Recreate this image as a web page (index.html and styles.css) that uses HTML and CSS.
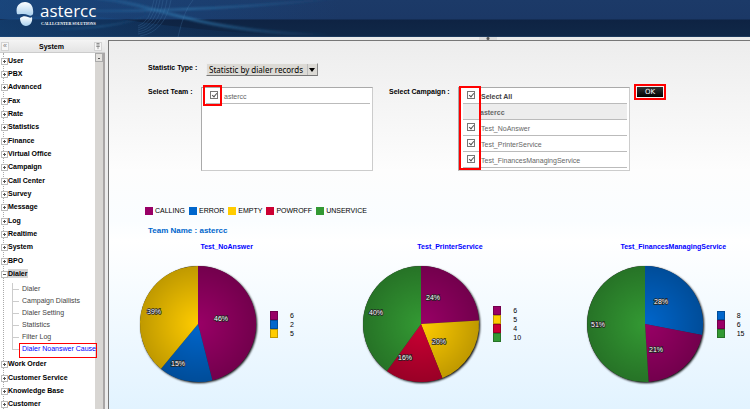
FILE: index.html
```html
<!DOCTYPE html>
<html lang="en">
<head>
<meta charset="utf-8">
<title>astercc - Dialer Noanswer Cause</title>
<link rel="stylesheet" href="styles.css">
</head>
<body>
<header class="banner">
  <svg class="waves" viewBox="0 0 340 37" aria-hidden="true">
    <defs>
      <linearGradient id="glow"><stop offset="0" stop-color="#2a6da6" stop-opacity=".3"/><stop offset=".4" stop-color="#2f78ad" stop-opacity=".7"/><stop offset="1" stop-color="#2a6da6" stop-opacity="0"/></linearGradient>
      <linearGradient id="haze"><stop offset="0" stop-color="#17518f" stop-opacity=".5"/><stop offset="1" stop-color="#17518f" stop-opacity="0"/></linearGradient>
      <filter id="soft"><feGaussianBlur stdDeviation="1"/></filter>
    </defs>
    <path d="M0 0H340V19H0Z" fill="url(#haze)"/>
    <path d="M0 37V20Q60 12 120 19Q190 30 300 37Z" fill="url(#haze)"/>
    <g fill="none" stroke="url(#glow)" filter="url(#soft)">
      <path d="M90 11Q220 11 340 -2" stroke-width="2"/>
      <path d="M95 -2C160 4 190 32 330 35" stroke-width="3"/>
      <path d="M60 29Q130 28 160 9" stroke-width="1"/>
    </g>
    <g fill="none" stroke="#4678a8" stroke-width=".5" opacity=".6">
      <path d="M138 26Q150 22 154 0"/><path d="M138 28Q153 24 157 0"/><path d="M138 30Q156 26 160 0"/><path d="M138 32Q159 28 163 0"/><path d="M138 34Q162 30 167 0"/><path d="M140 36Q165 32 171 0"/><path d="M178 37Q184 10 193 0"/>
    </g>
  </svg>
  <a class="brand" href="#">
    <svg class="logo" viewBox="0 0 18 24" aria-hidden="true">
      <defs><linearGradient id="mark" x2="0" y2="1"><stop offset="0" stop-color="#fff"/><stop offset="1" stop-color="#a9d0ee"/></linearGradient></defs>
      <path d="M1 12C-1 4 4 0 9 0C15 0 18 5 17 12C16 14 14 14 12 13C8 11 4 13 1 12Z" fill="url(#mark)"/>
      <path d="M4 16C7 14 9 14 12 15C14 16 15 16 16 15C17 20 14 24 10 24C6 24 4 20 4 16Z" fill="url(#mark)"/>
    </svg>
    <span class="brand-text"><span class="brand-name">astercc</span><span class="tagline">CALLI.CENTER SOLUTIONS</span></span>
  </a>
</header>
<div class="splitter"><button class="collapse" aria-label="Collapse banner"></button></div>
<div class="page">
  <nav class="sidebar">
    <div class="side-head"><button class="tool">«</button><h2>System</h2><button class="tool" aria-label="Pin">
      <svg viewBox="0 0 6 8" aria-hidden="true"><path d="M2 0V4M4 0V4M1 4H5M3 4V7M1.500 .5H4.500" stroke="#777" stroke-width=".8" fill="none"/></svg></button></div>
    <div class="side-body">
      <ul class="tree">
        <li><a href="#">User</a></li><li><a href="#">PBX</a></li><li><a href="#">Advanced</a></li><li><a href="#">Fax</a></li><li><a href="#">Rate</a></li><li><a href="#">Statistics</a></li><li><a href="#">Finance</a></li><li><a href="#">Virtual Office</a></li><li><a href="#">Campaign</a></li><li><a href="#">Call Center</a></li><li><a href="#">Survey</a></li><li><a href="#">Message</a></li><li><a href="#">Log</a></li><li><a href="#">Realtime</a></li><li><a href="#">System</a></li><li><a href="#">BPO</a></li>
        <li class="open"><a href="#">Dialer</a>
          <ul class="branch"><li><a href="#">Dialer</a></li><li><a href="#">Campaign Diallists</a></li><li><a href="#">Dialer Setting</a></li><li><a href="#">Statistics</a></li><li><a href="#">Filter Log</a></li><li class="current"><a href="#">Dialer Noanswer Cause</a></li></ul>
        </li>
        <li><a href="#">Work Order</a></li><li><a href="#">Customer Service</a></li><li><a href="#">Knowledge Base</a></li><li><a href="#">Customer</a></li>
      </ul>
      <div class="scroll"><button class="scroll-up" aria-label="Scroll up"></button></div>
    </div>
  </nav>
  <main class="content">
    <form class="filters">
      <div class="row type-row">
        <label class="caption" for="type">Statistic Type :</label>
        <span class="select"><select id="type"><option>Statistic by dialer records</option></select></span>
      </div>
      <div class="row">
        <span class="caption">Select Team :</span>
        <div class="list">
          <label class="item"><input type="checkbox" checked><span>astercc</span></label>
          <i class="mark mark-team"></i>
        </div>
        <span class="caption campaign">Select Campaign :</span>
        <div class="list campaigns">
          <label class="item all"><input type="checkbox" checked><span>Select All</span></label>
          <div class="item group"><span>astercc</span></div>
          <label class="item"><input type="checkbox" checked><span>Test_NoAnswer</span></label>
          <label class="item"><input type="checkbox" checked><span>Test_PrinterService</span></label>
          <label class="item"><input type="checkbox" checked><span>Test_FinancesManagingService</span></label>
          <i class="mark mark-campaigns"></i>
        </div>
        <div class="submit"><button type="button">OK</button></div>
      </div>
    </form>
    <ul class="key">
      <li><i class="calling"></i>CALLING</li><li><i class="error"></i>ERROR</li><li><i class="empty"></i>EMPTY</li><li><i class="powroff"></i>POWROFF</li><li><i class="unservice"></i>UNSERVICE</li>
    </ul>
    <h1>Team Name : astercc</h1>
    <div class="charts">
      <section class="chart">
        <h3>Test_NoAnswer</h3>
        <div class="plot">
          <svg class="pie" viewBox="0 0 120 120">
            <defs><radialGradient id="shade"><stop offset="0" stop-opacity="0"/><stop offset="1" stop-opacity=".25"/></radialGradient></defs>
            <circle class="base" cx="60" cy="60" r="58"/>
            <path class="calling" d="M60 60V2A58 58 0 0 1 74.400 116.200Z"/>
            <path class="error" d="M60 60L74.400 116.200A58 58 0 0 1 23 104.700Z"/>
            <path class="empty" d="M60 60L23 104.700A58 58 0 0 1 60 2Z"/>
            <circle cx="60" cy="60" r="58" fill="url(#shade)"/>
            <text x="83" y="57">46%</text><text x="40" y="102">15%</text><text x="16" y="50">39%</text>
          </svg>
          <ul class="counts"><li><i class="calling"></i>6</li><li><i class="error"></i>2</li><li><i class="empty"></i>5</li></ul>
        </div>
      </section>
      <section class="chart">
        <h3>Test_PrinterService</h3>
        <div class="plot">
          <svg class="pie" viewBox="0 0 120 120">
            <circle class="base" cx="60" cy="60" r="58"/>
            <path class="calling" d="M60 60V2A58 58 0 0 1 117.900 56.400Z"/>
            <path class="empty" d="M60 60L117.900 56.400A58 58 0 0 1 81.400 113.900Z"/>
            <path class="powroff" d="M60 60L81.400 113.900A58 58 0 0 1 25.900 106.900Z"/>
            <path class="unservice" d="M60 60L25.900 106.900A58 58 0 0 1 60 2Z"/>
            <circle cx="60" cy="60" r="58" fill="url(#shade)"/>
            <text x="72" y="36">24%</text><text x="78" y="80">20%</text><text x="44" y="96">16%</text><text x="15" y="51">40%</text>
          </svg>
          <ul class="counts"><li><i class="calling"></i>6</li><li><i class="empty"></i>5</li><li><i class="powroff"></i>4</li><li><i class="unservice"></i>10</li></ul>
        </div>
      </section>
      <section class="chart">
        <h3>Test_FinancesManagingService</h3>
        <div class="plot">
          <svg class="pie" viewBox="0 0 120 120">
            <circle class="base" cx="60" cy="60" r="58"/>
            <path class="error" d="M60 60V2A58 58 0 0 1 117 70.900Z"/>
            <path class="calling" d="M60 60L117 70.900A58 58 0 0 1 63.600 117.900Z"/>
            <path class="unservice" d="M60 60L63.600 117.900A58 58 0 1 1 60 2Z"/>
            <circle cx="60" cy="60" r="58" fill="url(#shade)"/>
            <text x="76" y="40">28%</text><text x="71" y="88">21%</text><text x="13" y="63">51%</text>
          </svg>
          <ul class="counts"><li><i class="error"></i>8</li><li><i class="calling"></i>6</li><li><i class="unservice"></i>15</li></ul>
        </div>
      </section>
    </div>
  </main>
</div>
</body>
</html>
```
FILE: styles.css
```css
* { box-sizing: border-box; }
html, body { height: 100%; }
body {
  margin: 0;
  display: flex;
  flex-direction: column;
  overflow: hidden;
  font: 7px/9px "Liberation Sans", Arial, sans-serif;
  background: #ececec;
  color: #000;
}
ul { list-style: none; margin: 0; padding: 0; }
h1, h2, h3 { margin: 0; font-size: inherit; }
a { color: inherit; text-decoration: none; }
button { padding: 0; border: 0; font: inherit; }

.calling { --c: #990066; }
.error { --c: #0066cc; }
.empty { --c: #ffcc00; }
.powroff { --c: #cc0033; }
.unservice { --c: #339933; }

/* Banner */
.banner {
  position: relative;
  flex: none;
  height: 37px;
  background: linear-gradient(#1c3a68, #1b3866 19px, #0e2343 20px, #102848 36px, #2a4a70);
}
.waves { position: absolute; left: 0; top: 0; width: 340px; height: 37px; }
.brand { position: relative; display: flex; gap: 6px; padding: 2px 0 0 16px; color: #fff; }
.logo { width: 18px; height: 24px; }
.brand-text { display: flex; flex-direction: column; }
.brand-name { font: 17px/18px "Open Sans", sans-serif; }
.tagline { font: bold 4px/8px "Liberation Serif", serif; padding-left: 1px; }
.splitter { flex: none; height: 3px; text-align: center; line-height: 0; padding-left: 226px; }
.collapse { width: 18px; height: 3px; background: radial-gradient(circle, #555 1px, #ddd 2px); }

/* Sidebar */
.page { flex: 1; min-height: 0; display: flex; gap: 3px; }
.sidebar { flex: none; width: 105px; display: flex; flex-direction: column; }
.side-head {
  display: flex;
  align-items: center;
  justify-content: space-between;
  height: 13px;
  padding: 0 3px 0 1px;
  border-bottom: 1px solid #ccc;
  background: linear-gradient(#f4f4f4, #e4e4e4);
}
.tool { width: 8px; height: 9px; border: 1px solid #d4d4d4; background: #f6f6f6; color: #777; line-height: 6px; }
.tool svg { display: block; width: 6px; height: 7px; }
.side-body { flex: 1; min-height: 0; display: flex; overflow: hidden; background: #fff; }
.tree { flex: 1; position: relative; z-index: 1; min-width: 0; padding-top: 1px; font-weight: bold; line-height: 13px; }
.tree::before { content: ""; position: absolute; left: 3px; top: 0; bottom: 0; border-left: 1px dotted #aaa; }
.tree > li { position: relative; padding-left: 8px; white-space: nowrap; }
.tree > li:nth-child(3n) { padding-bottom: 1px; }
.tree > li::before {
  content: "";
  position: absolute;
  left: 1px;
  top: 4px;
  width: 5px;
  height: 5px;
  border: 1px solid #bbb;
  background: linear-gradient(#555, #555) center / 3px 1px no-repeat, linear-gradient(#555, #555) center / 1px 3px no-repeat, #fff;
}
.tree > .open::before { background: linear-gradient(#555, #555) center / 3px 1px no-repeat, #fff; }
.open > a { background: #d6d6d6; padding: 1px 1px 1px 0; }
.branch { margin-left: 4px; padding: 3px 0 2px; font-weight: normal; line-height: 12px; color: #444; }
.branch li { position: relative; padding-left: 10px; }
.branch li::before { content: ""; position: absolute; left: 0; top: 0; width: 6px; height: 6px; border-bottom: 1px solid #ccc; border-left: 1px solid #ccc; }
.branch li:not(:last-child)::after { content: ""; position: absolute; left: 0; top: 6px; height: 6px; border-left: 1px solid #ccc; }
.branch .current { color: #00f; }
.current a::after { content: ""; position: absolute; left: 7px; right: -2px; top: 0; height: 13px; border: 1px solid #f00; }
.scroll { flex: none; width: 10px; background: #d8d6d3; border-right: 2px solid #a9a6a6; }
.scroll-up { display: block; width: 8px; height: 9px; border: 1px solid #aaa; background: conic-gradient(from 135deg at 50% 35%, #555 90deg, transparent 0) center / 4px 3px no-repeat, #e4e2df; }

/* Content */
.content {
  flex: 1;
  min-width: 0;
  overflow: hidden;
  border: solid #777;
  border-width: 1px 0 0 1px;
  background: linear-gradient(#ededed, #fdfdfd 130px, #fafdff 180px, #fff 200px, #e2f3ff);
}
.filters { padding: 22px 0 0 39px; }
.row { display: flex; align-items: flex-start; }
.caption { width: 53px; font-weight: bold; white-space: nowrap; }
.type-row .caption { width: 58px; }
.type-row { height: 24px; }
.select { position: relative; }
.select::after { content: ""; position: absolute; right: 3px; top: 5px; border: 3px solid transparent; border-top: 4px solid #000; border-bottom: 0; }
select {
  appearance: none;
  display: block;
  height: 13px;
  width: 112px;
  padding: 0 0 0 2px;
  border: 1px solid;
  border-color: #eee #888 #777 #eee;
  border-radius: 0;
  background: linear-gradient(#bbb, #bbb) 100px 0 / 1px 11px no-repeat, #dcdad5;
  font: 8px/11px "Noto Sans", "DejaVu Sans", sans-serif;
}
.list { position: relative; width: 172px; height: 84px; padding: 0 2px 0 4px; background: #fff; border: 1px solid #c4c4c4; border-color: #aaa #ccc #ccc #aaa; }
.campaign { width: 69px; margin-left: 16px; }
.item { display: flex; align-items: center; gap: 6px; height: 16px; padding-left: 4px; border-bottom: 1px solid #bbb; color: #666; }
.item input {
  appearance: none;
  position: relative;
  width: 8px;
  height: 8px;
  margin: 0 0 1px;
  border: 1px solid #777;
  background: #fff;
}
.item input:checked::before { content: ""; position: absolute; left: 2px; top: 0; width: 2px; height: 4px; border: solid #555; border-width: 0 1px 1px 0; transform: rotate(40deg); }
.item span { padding-top: 2px; }
.all { font-weight: bold; color: #444; }
.group { padding-left: 17px; background: #ededed; font-weight: bold; }
.mark { position: absolute; border: 2px solid #f00; }
.mark-team { left: 1px; top: -3px; width: 19px; height: 21px; }
.mark-campaigns { left: 0; top: -2px; width: 22px; height: 84px; }
.submit { margin: -3px 0 0 4px; padding: 1px; border: 2px solid #f00; }
.submit button { display: block; width: 26px; height: 10px; background: linear-gradient(#333, #000); color: #fff; font: 7px/10px "DejaVu Sans", sans-serif; }

.key { display: flex; gap: 4px; margin: 35px 0 0 36px; }
.key li { display: flex; align-items: center; gap: 2px; }
.key i, .counts i { width: 8px; height: 8px; background: var(--c); }
h1 { margin: 11px 0 0 39px; font-size: 8px; color: #0066cc; }

.charts { display: grid; grid-template-columns: repeat(3, 1fr); margin: 7px -35px 0 6px; }
.chart h3 { text-align: center; color: #00f; }
.plot { display: flex; align-items: center; gap: 12px; padding: 13px 0 0 23px; }
.pie { flex: none; width: 120px; height: 120px; overflow: visible; }
.pie path { fill: var(--c); }
.base { fill: #333; filter: drop-shadow(1px 1px 1px #000); }
.pie text { font-size: 7px; fill: #fff; stroke: #222; stroke-width: 1.5px; paint-order: stroke; text-anchor: middle; }
.counts li { display: flex; align-items: center; }
.counts { line-height: 9px; }
.counts i { margin-right: 12px; height: 9px; border: 1px solid rgb(0 0 0 / .25); }
```
